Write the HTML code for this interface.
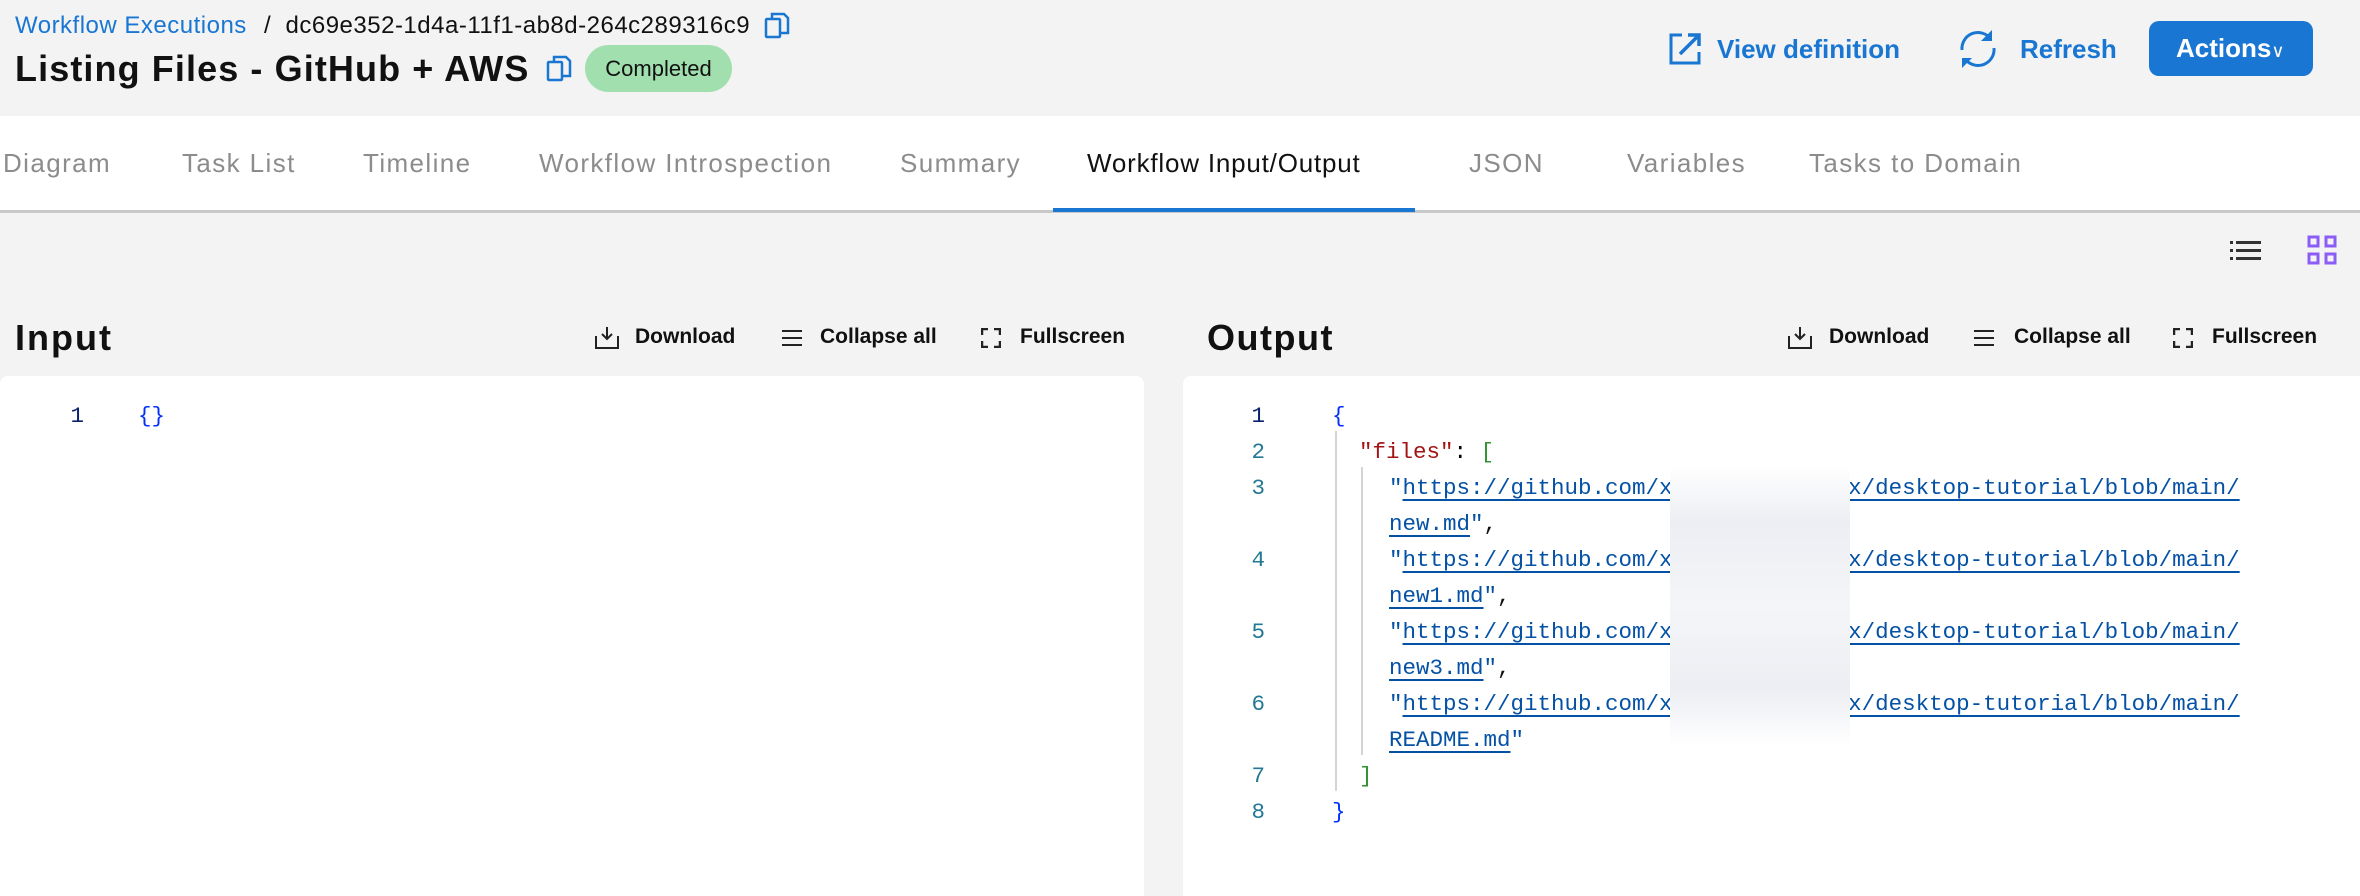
<!DOCTYPE html>
<html><head><meta charset="utf-8"><style>
*{margin:0;padding:0;box-sizing:border-box}
body{width:2360px;height:882px;overflow:hidden;background:#f3f3f3;font-family:"Liberation Sans",sans-serif;position:relative}
.a{position:absolute;white-space:nowrap}
.tabs{position:absolute;left:0;top:116px;width:2360px;height:97px;background:#fff;border-bottom:3px solid #c8c8c8}
.tab{position:absolute;top:32px;font-size:26px;color:#8c8c8c;letter-spacing:1.4px;white-space:nowrap}
.act{font-size:21px;font-weight:bold;color:#111;top:325px}
.panel{position:absolute;top:376px;background:#fff;border-radius:8px 8px 0 0;height:520px}
.mono{font-family:"Liberation Mono",monospace;font-size:22.5px}
.ln{position:absolute;width:30px;text-align:right;color:#237893}
.code{position:absolute;white-space:nowrap}
.lk{color:#0451a5;text-decoration:underline;text-decoration-thickness:2px;text-underline-offset:5px}
</style></head><body>
<div class="a" style="left:15px;top:12px;font-size:24px;color:#1976d2;letter-spacing:0.5px">Workflow Executions</div>
<div class="a" style="left:264px;top:12px;font-size:24px;color:#111;letter-spacing:0.5px">/&nbsp; dc69e352-1d4a-11f1-ab8d-264c289316c9</div>
<svg class="a" style="left:764px;top:12px" width="26" height="28" viewBox="0 0 26 28"><rect x="2" y="7" width="14" height="18" rx="1" fill="none" stroke="#1976d2" stroke-width="2.5"/><path d="M8 7V2h12l4 4v15h-8" fill="none" stroke="#1976d2" stroke-width="2.5"/></svg>
<div class="a" style="left:15px;top:48px;font-size:36px;font-weight:bold;color:#111;letter-spacing:1.1px">Listing Files - GitHub + AWS</div>
<svg class="a" style="left:546px;top:55px" width="26" height="28" viewBox="0 0 26 28"><rect x="2" y="7" width="14" height="18" rx="1" fill="none" stroke="#1976d2" stroke-width="2.5"/><path d="M8 7V2h12l4 4v15h-8" fill="none" stroke="#1976d2" stroke-width="2.5"/></svg>
<div class="a" style="left:585px;top:45px;width:147px;height:47px;border-radius:24px;background:#a2dfae;font-size:22px;color:#111;text-align:center;line-height:47px">Completed</div>
<svg class="a" style="left:1668px;top:32px" width="34" height="34" viewBox="0 0 34 34"><path d="M14 3H3v28h28V20" fill="none" stroke="#1976d2" stroke-width="3"/><path d="M12 22L30 4M20 3h11v11" fill="none" stroke="#1976d2" stroke-width="3.5"/></svg>
<div class="a" style="left:1717px;top:34px;font-size:26px;font-weight:bold;color:#1976d2">View definition</div>
<svg class="a" style="left:1958px;top:28px" width="40" height="42" viewBox="0 0 40 42"><path d="M4 22A16 16 0 0 1 32 10" fill="none" stroke="#1976d2" stroke-width="3"/><path d="M36 20A16 16 0 0 1 8 32" fill="none" stroke="#1976d2" stroke-width="3"/><path d="M4 40V30h10z" fill="#1976d2"/><path d="M34 2v11H23z" fill="#1976d2"/></svg>
<div class="a" style="left:2020px;top:34px;font-size:26px;font-weight:bold;color:#1976d2">Refresh</div>
<div class="a" style="left:2149px;top:21px;width:164px;height:55px;background:#1976d2;border-radius:10px;color:#fff;font-size:26px;font-weight:bold;line-height:55px;padding-left:27px">Actions<span style="font-size:18px;font-weight:normal">&#8744;</span></div>
<div class="tabs">
<div class="tab" style="left:3px">Diagram</div>
<div class="tab" style="left:182px">Task List</div>
<div class="tab" style="left:363px">Timeline</div>
<div class="tab" style="left:539px">Workflow Introspection</div>
<div class="tab" style="left:900px">Summary</div>
<div class="tab" style="left:1087px;color:#111;letter-spacing:0.8px">Workflow Input/Output</div>
<div class="tab" style="left:1469px">JSON</div>
<div class="tab" style="left:1627px">Variables</div>
<div class="tab" style="left:1809px">Tasks to Domain</div>
<div style="position:absolute;left:1053px;top:92px;width:362px;height:4px;background:#1976d2"></div>
</div>
<svg class="a" style="left:2230px;top:240px" width="32" height="22" viewBox="0 0 32 22"><g fill="#333"><rect x="0" y="1" width="3" height="3"/><rect x="0" y="9" width="3" height="3"/><rect x="0" y="17" width="3" height="3"/><rect x="6" y="1" width="25" height="3"/><rect x="6" y="9" width="25" height="3"/><rect x="6" y="17" width="25" height="3"/></g></svg>
<svg class="a" style="left:2307px;top:235px" width="30" height="30" viewBox="0 0 30 30"><g fill="none" stroke="#8b5cf6" stroke-width="3"><rect x="2" y="2" width="9" height="9"/><rect x="19" y="2" width="9" height="9"/><rect x="2" y="19" width="9" height="9"/><rect x="19" y="19" width="9" height="9"/></g></svg>
<div class="a" style="left:15px;top:317px;font-size:36px;font-weight:bold;color:#111;letter-spacing:2px">Input</div>
<svg class="a" style="left:594px;top:326px" width="26" height="24" viewBox="0 0 26 24"><path d="M2 10v12h22v-12M13 1v12M8 8l5 5 5-5" fill="none" stroke="#222" stroke-width="2"/></svg>
<div class="a act" style="left:635px">Download</div>
<svg class="a" style="left:781px;top:328px" width="22" height="20"><path d="M1 3h20M1 10h20M1 17h20" stroke="#222" stroke-width="2"/></svg>
<div class="a act" style="left:820px">Collapse all</div>
<svg class="a" style="left:981px;top:328px" width="20" height="20"><path d="M1 7V1h6M13 1h6v6M19 13v6h-6M7 19H1v-6" fill="none" stroke="#222" stroke-width="2.5"/></svg>
<div class="a act" style="left:1020px">Fullscreen</div>
<div class="a" style="left:1207px;top:317px;font-size:36px;font-weight:bold;color:#111;letter-spacing:1.5px">Output</div>
<svg class="a" style="left:1787px;top:326px" width="26" height="24" viewBox="0 0 26 24"><path d="M2 10v12h22v-12M13 1v12M8 8l5 5 5-5" fill="none" stroke="#222" stroke-width="2"/></svg>
<div class="a act" style="left:1829px">Download</div>
<svg class="a" style="left:1973px;top:328px" width="22" height="20"><path d="M1 3h20M1 10h20M1 17h20" stroke="#222" stroke-width="2"/></svg>
<div class="a act" style="left:2014px">Collapse all</div>
<svg class="a" style="left:2173px;top:328px" width="20" height="20"><path d="M1 7V1h6M13 1h6v6M19 13v6h-6M7 19H1v-6" fill="none" stroke="#222" stroke-width="2.5"/></svg>
<div class="a act" style="left:2212px">Fullscreen</div>
<div class="panel" style="left:0;width:1144px">
<div class="mono ln" style="left:54px;top:27px;color:#0b216f">1</div>
<div class="mono code" style="left:138px;top:27px;color:#0431fa">{}</div>
</div>
<div class="panel mono" style="left:1183px;width:1190px">
<div style="position:absolute;left:152px;top:55px;width:2px;height:360px;background:#d4d4d4"></div>
<div style="position:absolute;left:178px;top:91px;width:2px;height:288px;background:#d4d4d4"></div>
<div class="ln" style="left:52px;top:27px;color:#0b216f">1</div>
<div class="ln" style="left:52px;top:63px">2</div>
<div class="ln" style="left:52px;top:99px">3</div>
<div class="ln" style="left:52px;top:171px">4</div>
<div class="ln" style="left:52px;top:243px">5</div>
<div class="ln" style="left:52px;top:315px">6</div>
<div class="ln" style="left:52px;top:387px">7</div>
<div class="ln" style="left:52px;top:423px">8</div>
<div class="code" style="left:149px;top:27px;color:#0431fa">{</div>
<div class="code" style="left:176px;top:63px"><span style="color:#a31515">"files"</span>: <span style="color:#319331">[</span></div>
<div class="code" style="left:206px;top:99px;color:#0451a5">"<span class="lk">https://github.com/xxxxxxxxxxxxxxx/desktop-tutorial/blob/main/</span></div>
<div class="code" style="left:206px;top:135px;color:#0451a5"><span class="lk">new.md</span>"<span style="color:#111">,</span></div>
<div class="code" style="left:206px;top:171px;color:#0451a5">"<span class="lk">https://github.com/xxxxxxxxxxxxxxx/desktop-tutorial/blob/main/</span></div>
<div class="code" style="left:206px;top:207px;color:#0451a5"><span class="lk">new1.md</span>"<span style="color:#111">,</span></div>
<div class="code" style="left:206px;top:243px;color:#0451a5">"<span class="lk">https://github.com/xxxxxxxxxxxxxxx/desktop-tutorial/blob/main/</span></div>
<div class="code" style="left:206px;top:279px;color:#0451a5"><span class="lk">new3.md</span>"<span style="color:#111">,</span></div>
<div class="code" style="left:206px;top:315px;color:#0451a5">"<span class="lk">https://github.com/xxxxxxxxxxxxxxx/desktop-tutorial/blob/main/</span></div>
<div class="code" style="left:206px;top:351px;color:#0451a5"><span class="lk">README.md</span>"</div>
<div class="code" style="left:176px;top:387px;color:#319331">]</div>
<div class="code" style="left:149px;top:423px;color:#0431fa">}</div>
<div style="position:absolute;left:487px;top:90px;width:180px;height:280px;background:linear-gradient(#fff,#eceef3 20%,#f4f5f8 50%,#eceef3 80%,#fff)"></div>
</div>
</body></html>
